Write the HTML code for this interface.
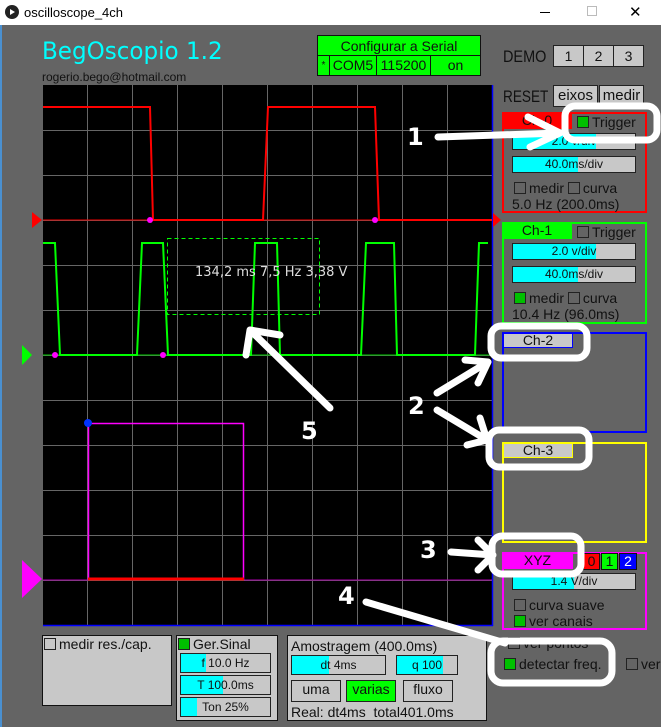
<!DOCTYPE html>
<html><head><meta charset="utf-8"><style>
*{margin:0;padding:0;box-sizing:border-box}
body{width:663px;height:727px;background:#646464;position:relative;overflow:hidden;font-family:"Liberation Sans",sans-serif;color:#111}
.a{position:absolute}
.tb{left:0;top:0;width:663px;height:25px;background:#fff;font-family:"Liberation Sans",sans-serif;font-size:13px;color:#000}
.sl{position:absolute;height:17px;background:#c8c8c8;border:1px solid #222;font-size:12px;text-align:center;line-height:15px;overflow:hidden}
.sl i{position:absolute;left:0;top:0;bottom:0;background:#0ff}
.sl span{position:relative}
.cb{display:inline-block;width:12px;height:12px;border:1px solid #222;vertical-align:-1px;margin-right:3px}
.g{background:#00c000}
.t{position:absolute;font-size:14px;white-space:nowrap}
.gb{position:absolute;background:#c8c8c8;border:1px solid #222;text-align:center;font-size:14px}
.n{display:inline-block;transform:scaleX(0.82);transform-origin:left center}
</style></head><body>
<div class="a tb">
<div class="a" style="left:5px;top:5px;width:14px;height:14px;border-radius:7px;background:#222"></div>
<div class="a" style="left:10px;top:9px;width:0;height:0;border-left:5px solid #fff;border-top:3px solid transparent;border-bottom:3px solid transparent"></div>
<div class="a" style="left:24px;top:5px">oscilloscope_4ch</div>
<div class="a" style="left:540px;top:12px;width:10px;height:1px;background:#000"></div>
<div class="a" style="left:587px;top:6px;width:10px;height:10px;border:1px solid #bbb"></div>
<div class="a" style="left:629px;top:3px;font-size:15px">✕</div>
</div>
<div class="a" style="left:661px;top:25px;width:2px;height:702px;background:#fff"></div>
<div class="t" style="left:42px;top:37px;font-size:24px;color:#0ff;font-family:'DejaVu Sans',sans-serif"><span class="n" style="transform:scaleX(0.96)">BegOscopio 1.2</span></div>
<div class="t" style="left:42px;top:70px;font-size:12px">rogerio.bego@hotmail.com</div>
<div class="a" style="left:317px;top:35px;width:164px;height:41px;background:#0f0;border:1px solid #111;font-size:14px">
<div class="a" style="left:0;top:0;width:162px;height:20px;border-bottom:1px solid #111;text-align:center;line-height:20px">Configurar a Serial</div>
<div class="a" style="left:0;top:20px;width:12px;height:19px;border-right:1px solid #111;font-size:10px;text-align:center;line-height:19px">*</div>
<div class="a" style="left:12px;top:20px;width:47px;height:19px;border-right:1px solid #111;text-align:center;line-height:19px">COM5</div>
<div class="a" style="left:59px;top:20px;width:54px;height:19px;border-right:1px solid #111;text-align:center;line-height:19px">115200</div>
<div class="a" style="left:113px;top:20px;width:49px;height:19px;text-align:center;line-height:19px">on</div>
</div>
<div class="t" style="left:503px;top:47px;font-size:17px"><span class="n" style="transform:scaleX(0.85)">DEMO</span></div>
<div class="gb" style="left:553px;top:57px;width:31px;height:22px;top:57px;display:none"></div>
<div class="gb" style="left:553px;top:57px;width:31px;height:22px;line-height:20px;top:57px;top:57px;top:57px;top:57px;position:absolute;top:57px;top:57px;top:57px;top:57px;top:57px;top:57px;top:57px;top:57px;top:57px;top:57px;top:57px;top:57px;top:57px;top:57px;top:57px;top:57px;top:57px;top:57px;top:57px;top:57px;top:57px;top:57px;top:57px;top:57px;top:57px;top:57px;top:57px;top:57px;top:57px;top:57px;top:57px;top:57px;top:57px;top:57px;top:57px;top:57px;top:57px;top:57px;top:57px;top:57px;top:57px;top:57px;top:57px;top:57px;top:57px;top:57px;top:57px;top:57px;top:57px;top:57px;top:57px;top:57px;top:57px;top:57px;top:57px;top:57px;top:57px;top:57px;top:57px;top:57px;top:57px;top:57px;top:57px;top:57px;top:57px;top:57px;top:57px;top:57px;top:57px;top:57px;top:57px;top:57px;top:57px;top:57px;top:57px;top:57px;top:57px;top:57px;top:57px;top:57px;top:57px;top:57px;top:57px;top:57px;top:57px;top:57px;top:57px;top:57px;top:57px;top:57px;top:57px;top:57px;display:none"></div>
<div class="gb" style="left:553px;top:57px;display:none"></div>
<div class="gb" style="left:553px;top:45px;width:31px;height:22px;line-height:20px">1</div>
<div class="gb" style="left:583px;top:45px;width:31px;height:22px;line-height:20px">2</div>
<div class="gb" style="left:613px;top:45px;width:31px;height:22px;line-height:20px">3</div>
<div class="t" style="left:503px;top:87px;font-size:17px"><span class="n" style="transform:scaleX(0.8)">RESET</span></div>
<div class="gb" style="left:553px;top:85px;width:45px;height:22px;line-height:20px;font-size:15px">eixos</div>
<div class="gb" style="left:599px;top:85px;width:45px;height:22px;line-height:20px;font-size:15px">medir</div>

<svg class="a" style="left:0;top:0" width="663" height="727">
<rect x="43" y="85" width="450" height="541" fill="#000"/>
<g stroke="#666" stroke-width="1">
<path d="M87.5 85V626M132.5 85V626M177.5 85V626M222.5 85V626M267.5 85V626M312.5 85V626M357.5 85V626M402.5 85V626M447.5 85V626"/>
<path d="M43 130.5H492M43 175.5H492M43 220.5H492M43 265.5H492M43 310.5H492M43 355.5H492M43 400.5H492M43 445.5H492M43 490.5H492M43 535.5H492M43 580.5H492"/>
</g>
<path d="M43 625.5H493M492.5 85V626" stroke="#00f" stroke-width="1.5"/>
<path d="M1 25V727" stroke="#4a90d0" stroke-width="2"/>
<path d="M43 220H492" stroke="#e00" stroke-width="1"/>
<path d="M43 355H492" stroke="#0c0" stroke-width="1"/>
<path d="M43 580H492" stroke="#a0a" stroke-width="1"/>
<path d="M43 107H150L153 220H263L268 107H375L379 220H492" fill="none" stroke="#f00" stroke-width="2"/>
<path d="M43 243H55L60 355H137L142 243H163L168 355H251L255 243H277L280 355H361L366 243H394L397 355H475L479 243H488" fill="none" stroke="#0f0" stroke-width="2"/>
<circle cx="55" cy="355" r="3" fill="#f0f"/><circle cx="163" cy="355" r="3" fill="#f0f"/>
<circle cx="150" cy="220" r="3" fill="#f0f"/><circle cx="375" cy="220" r="3" fill="#f0f"/>
<rect x="167.5" y="238.5" width="152" height="76" fill="none" stroke="#0f0" stroke-dasharray="4,3"/>
<text x="195" y="276" fill="#ddd" font-size="13" font-family="DejaVu Sans">134,2 ms 7,5 Hz  3,38 V</text>
<rect x="88.5" y="423.5" width="155" height="156" fill="none" stroke="#f0f" stroke-width="1.5"/>
<path d="M88 579H244" stroke="#f00" stroke-width="3"/>
<circle cx="88" cy="423" r="4" fill="#03f"/>
<path d="M32 212L42 220L32 228Z" fill="#f00"/>
<path d="M22 345L32 355L22 365Z" fill="#0f0"/>
<path d="M22 560L42 579L22 598Z" fill="#f0f"/>
<path d="M493 213L501 220L493 227Z" fill="#f00"/>
</svg>

<!-- Ch-0 -->
<div class="a" style="left:502px;top:112px;width:145px;height:101px;border:2px solid #f00"></div>
<div class="a" style="left:502px;top:112px;width:70px;height:17px;background:#f00;font-size:14px;text-align:center">Ch-0</div>
<div class="t" style="left:577px;top:114px"><span class="cb g"></span>Trigger</div>
<div class="sl" style="left:512px;top:133px;width:124px"><i style="width:83px"></i><span>2.0 v/div</span></div>
<div class="sl" style="left:512px;top:156px;width:124px"><i style="width:65px"></i><span>40.0ms/div</span></div>
<div class="t" style="left:514px;top:180px"><span class="cb"></span>medir <span class="cb"></span>curva</div>
<div class="t" style="left:512px;top:196px">5.0 Hz (200.0ms)</div>
<!-- Ch-1 -->
<div class="a" style="left:502px;top:222px;width:145px;height:102px;border:2px solid #0f0"></div>
<div class="a" style="left:502px;top:222px;width:70px;height:17px;background:#0f0;font-size:14px;text-align:center">Ch-1</div>
<div class="t" style="left:577px;top:224px"><span class="cb"></span>Trigger</div>
<div class="sl" style="left:512px;top:243px;width:124px"><i style="width:83px"></i><span>2.0 v/div</span></div>
<div class="sl" style="left:512px;top:266px;width:124px"><i style="width:65px"></i><span>40.0ms/div</span></div>
<div class="t" style="left:514px;top:290px"><span class="cb g"></span>medir <span class="cb"></span>curva</div>
<div class="t" style="left:512px;top:306px">10.4 Hz (96.0ms)</div>
<!-- Ch-2 -->
<div class="a" style="left:502px;top:332px;width:145px;height:101px;border:2px solid #00f"></div>
<div class="a" style="left:503px;top:333px;width:70px;height:15px;background:#c8c8c8;border:1px solid #00f;font-size:14px;text-align:center;line-height:13px">Ch-2</div>
<!-- Ch-3 -->
<div class="a" style="left:502px;top:442px;width:145px;height:101px;border:2px solid #ff0"></div>
<div class="a" style="left:503px;top:443px;width:70px;height:15px;background:#c8c8c8;border:1px solid #ff0;font-size:14px;text-align:center;line-height:13px">Ch-3</div>
<!-- XYZ -->
<div class="a" style="left:502px;top:552px;width:145px;height:78px;border:2px solid #f0f"></div>
<div class="a" style="left:502px;top:552px;width:71px;height:17px;background:#f0f;font-size:14px;text-align:center">XYZ</div>
<div class="a" style="left:583px;top:553px;width:17px;height:17px;background:#f00;border:1px solid #111;font-size:14px;text-align:center;line-height:15px">0</div>
<div class="a" style="left:601px;top:553px;width:17px;height:17px;background:#0f0;border:1px solid #111;font-size:14px;text-align:center;line-height:15px">1</div>
<div class="a" style="left:619px;top:553px;width:18px;height:17px;background:#00f;border:1px solid #111;font-size:14px;text-align:center;line-height:15px;color:#fff">2</div>
<div class="sl" style="left:512px;top:573px;width:124px"><i style="width:61px"></i><span>1.4 V/div</span></div>
<div class="t" style="left:514px;top:597px"><span class="cb"></span>curva suave</div>
<div class="t" style="left:514px;top:613px"><span class="cb g"></span>ver canais</div>
<div class="t" style="left:508px;top:635px"><span class="cb"></span>ver pontos</div>
<div class="t" style="left:504px;top:656px"><span class="cb g"></span>detectar freq.</div>
<div class="t" style="left:626px;top:656px"><span class="cb"></span>ver</div>

<!-- bottom -->
<div class="a" style="left:42px;top:635px;width:130px;height:71px;background:#c8c8c8;border:1px solid #111"></div>
<div class="t" style="left:44px;top:636px"><span class="cb"></span>medir res./cap.</div>
<div class="a" style="left:176px;top:635px;width:102px;height:86px;background:#c8c8c8;border:1px solid #111"></div>
<div class="t" style="left:178px;top:636px"><span class="cb g"></span>Ger.Sinal</div>
<div class="sl" style="left:180px;top:653px;width:91px;height:20px;line-height:18px"><i style="width:25px"></i><span>f 10.0 Hz</span></div>
<div class="sl" style="left:180px;top:675px;width:91px;height:20px;line-height:18px"><i style="width:42px"></i><span>T 100.0ms</span></div>
<div class="sl" style="left:180px;top:697px;width:91px;height:20px;line-height:18px"><i style="width:16px"></i><span>Ton 25%</span></div>
<div class="a" style="left:287px;top:635px;width:200px;height:86px;background:#c8c8c8;border:1px solid #111"></div>
<div class="t" style="left:291px;top:638px">Amostragem (400.0ms)</div>
<div class="sl" style="left:291px;top:655px;width:95px;height:20px;line-height:18px"><i style="width:37px"></i><span>dt 4ms</span></div>
<div class="sl" style="left:396px;top:655px;width:62px;height:20px;line-height:18px"><i style="width:46px"></i><span>q 100</span></div>
<div class="gb" style="left:291px;top:680px;width:50px;height:22px">uma</div>
<div class="gb" style="left:346px;top:680px;width:50px;height:22px;background:#0f0">varias</div>
<div class="gb" style="left:403px;top:680px;width:50px;height:22px">fluxo</div>
<div class="t" style="left:291px;top:704px">Real: dt4ms &nbsp;total401.0ms</div>

<!-- annotations -->
<svg class="a" style="left:0;top:0" width="663" height="727">
<g fill="none" stroke="#fff" stroke-width="7" stroke-linecap="round" stroke-linejoin="round">
<rect x="565" y="106" width="92" height="34" rx="10"/>
<rect x="491" y="326" width="96" height="32" rx="10"/>
<rect x="489" y="430" width="100" height="37" rx="10"/>
<rect x="492" y="536" width="89" height="38" rx="10"/>
<rect x="491" y="641" width="121" height="42" rx="12"/>
<path d="M438 137L560 133M528 117L560 133L530 147"/>
<path d="M437 393L488 362M465 360L488 362L478 383"/>
<path d="M437 410L487 440M467 445L487 440L480 418"/>
<path d="M451 552L493 555M478 540L493 555L478 570"/>
<path d="M366 602L505 643"/>
<path d="M330 408L250 330M246 355L250 330L280 335"/>
</g>
<g fill="#fff" font-family="DejaVu Sans" font-weight="bold" font-size="24">
<text x="407" y="145">1</text><text x="408" y="414">2</text><text x="420" y="558">3</text><text x="338" y="604">4</text><text x="301" y="439">5</text>
</g>
</svg>
</body></html>
